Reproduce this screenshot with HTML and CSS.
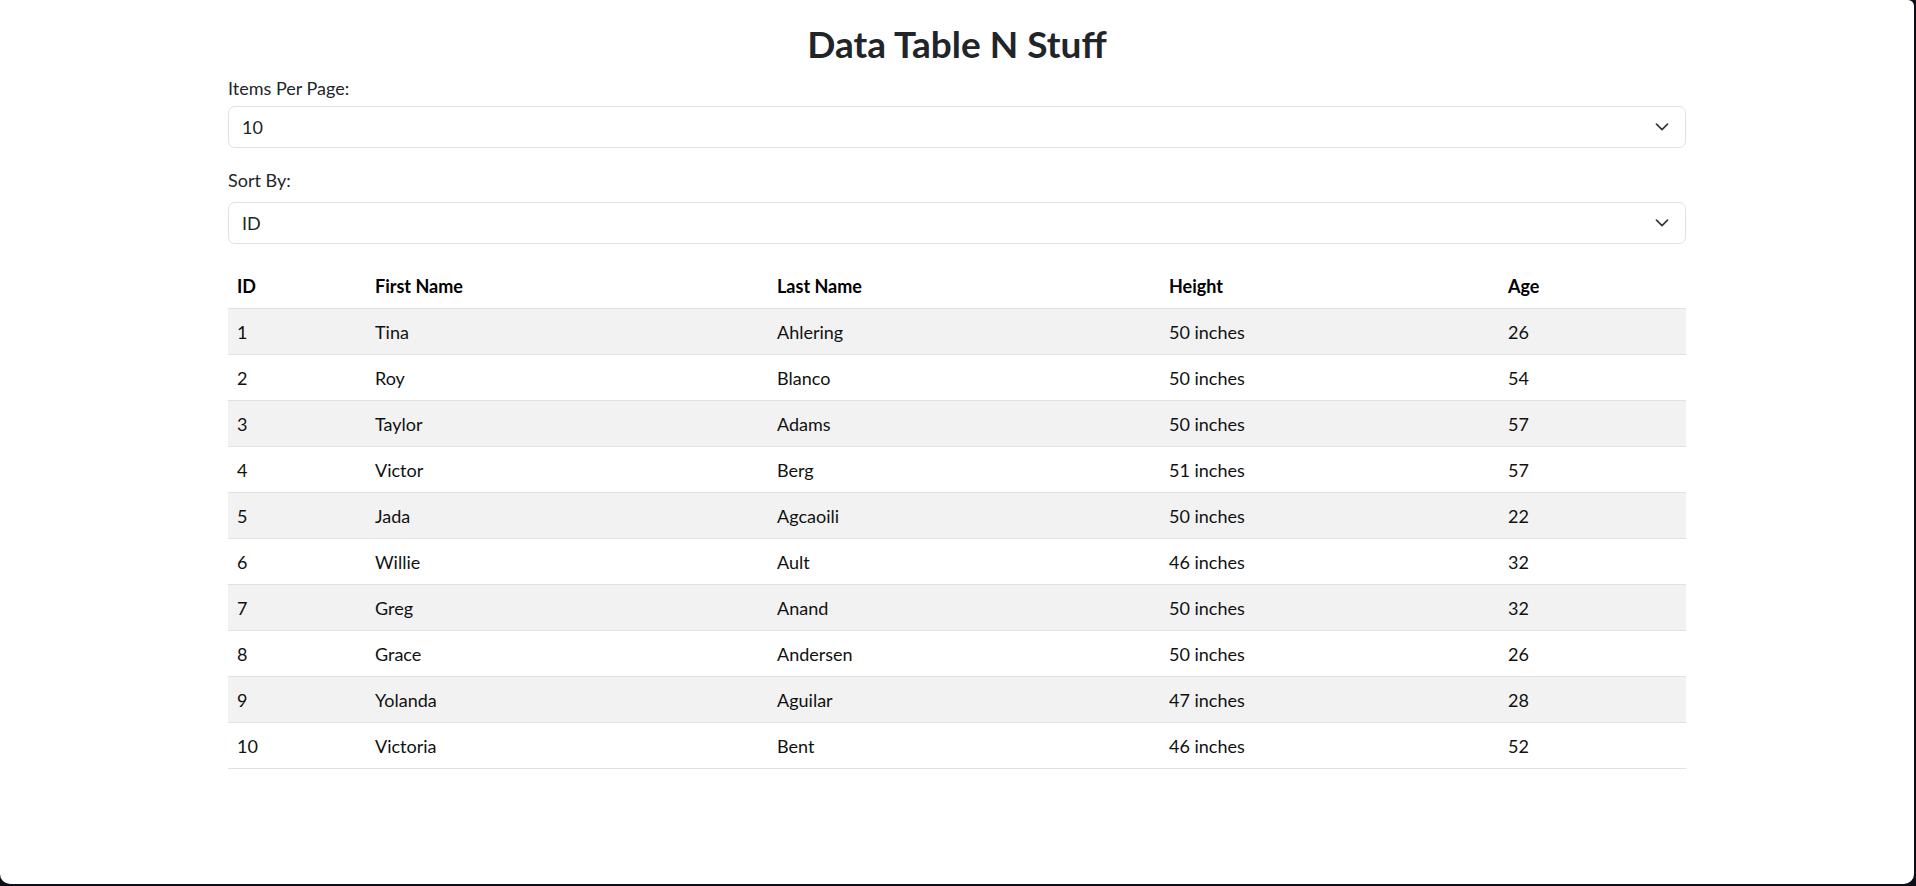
FILE: index.html
```html
<!DOCTYPE html>
<html lang="en">
<head>
<meta charset="utf-8">
<title>Data Table N Stuff</title>
<link rel="stylesheet" href="styles.css">
</head>
<body>
<div class="frame">
  <main class="container">
    <h1 class="title">Data Table N Stuff</h1>
    <label class="field-label">Items Per Page:</label>
    <div class="select">
      <span>10</span>
      <svg class="chev" width="14" height="8" viewBox="0 0 14 8"><path d="M1.5 1.2l5.5 5.5 5.5-5.5" fill="none" stroke="#343a40" stroke-width="1.7" stroke-linecap="round" stroke-linejoin="round"/></svg>
    </div>
    <label class="field-label second">Sort By:</label>
    <div class="select">
      <span>ID</span>
      <svg class="chev" width="14" height="8" viewBox="0 0 14 8"><path d="M1.5 1.2l5.5 5.5 5.5-5.5" fill="none" stroke="#343a40" stroke-width="1.7" stroke-linecap="round" stroke-linejoin="round"/></svg>
    </div>
    <table class="data">
      <colgroup>
        <col class="c-id"><col class="c-first"><col class="c-last"><col class="c-height"><col class="c-age">
      </colgroup>
      <thead>
        <tr><th>ID</th><th>First Name</th><th>Last Name</th><th>Height</th><th>Age</th></tr>
      </thead>
      <tbody>
        <tr><td>1</td><td>Tina</td><td>Ahlering</td><td>50 inches</td><td>26</td></tr>
        <tr><td>2</td><td>Roy</td><td>Blanco</td><td>50 inches</td><td>54</td></tr>
        <tr><td>3</td><td>Taylor</td><td>Adams</td><td>50 inches</td><td>57</td></tr>
        <tr><td>4</td><td>Victor</td><td>Berg</td><td>51 inches</td><td>57</td></tr>
        <tr><td>5</td><td>Jada</td><td>Agcaoili</td><td>50 inches</td><td>22</td></tr>
        <tr><td>6</td><td>Willie</td><td>Ault</td><td>46 inches</td><td>32</td></tr>
        <tr><td>7</td><td>Greg</td><td>Anand</td><td>50 inches</td><td>32</td></tr>
        <tr><td>8</td><td>Grace</td><td>Andersen</td><td>50 inches</td><td>26</td></tr>
        <tr><td>9</td><td>Yolanda</td><td>Aguilar</td><td>47 inches</td><td>28</td></tr>
        <tr><td>10</td><td>Victoria</td><td>Bent</td><td>46 inches</td><td>52</td></tr>
      </tbody>
    </table>
  </main>
</div>
</body>
</html>
```

FILE: styles.css
```css
html {
  background: #0e0e1a;
}
body {
  margin: 0;
  font-family: Lato, "Liberation Sans", sans-serif;
  font-size: 18px;
  color: #212529;
}
.frame {
  width: 1914px;
  height: 884px;
  background: #ffffff;
  border-radius: 0 6px 10px 10px;
  overflow: hidden;
}
.container {
  width: 1458px;
  margin: 0 auto;
  display: flex;
  flex-direction: column;
}
.title {
  margin: 22px 0 0;
  font-size: 37px;
  line-height: 43px;
  font-weight: 700;
  text-align: center;
  color: #212529;
}
.field-label {
  margin-top: 10px;
  line-height: 26px;
  height: 26px;
}
.field-label.second {
  margin-top: 19px;
}
.select {
  margin-top: 5px;
  box-sizing: border-box;
  height: 42px;
  border: 1px solid #dee2e6;
  border-radius: 6.6px;
  padding: 0 16px 0 13px;
  display: flex;
  align-items: center;
  justify-content: space-between;
  line-height: 26px;
}
.field-label.second + .select {
  margin-top: 9px;
}
.chev {
  display: block;
}
.data {
  margin-top: 19px;
  width: 100%;
  table-layout: fixed;
  border-collapse: separate;
  border-spacing: 0;
}
.c-id { width: 138px; }
.c-first { width: 402px; }
.c-last { width: 392px; }
.c-height { width: 339px; }
.data th,
.data td {
  text-align: left;
  padding: 10px 9px 9px;
  line-height: 26px;
  border-bottom: 1px solid #dee2e6;
  white-space: nowrap;
}
.data th {
  font-weight: 700;
  color: #000;
}
.data td {
  color: #111;
}
.data tbody tr:nth-child(odd) td {
  background: #f2f2f2;
}
```
